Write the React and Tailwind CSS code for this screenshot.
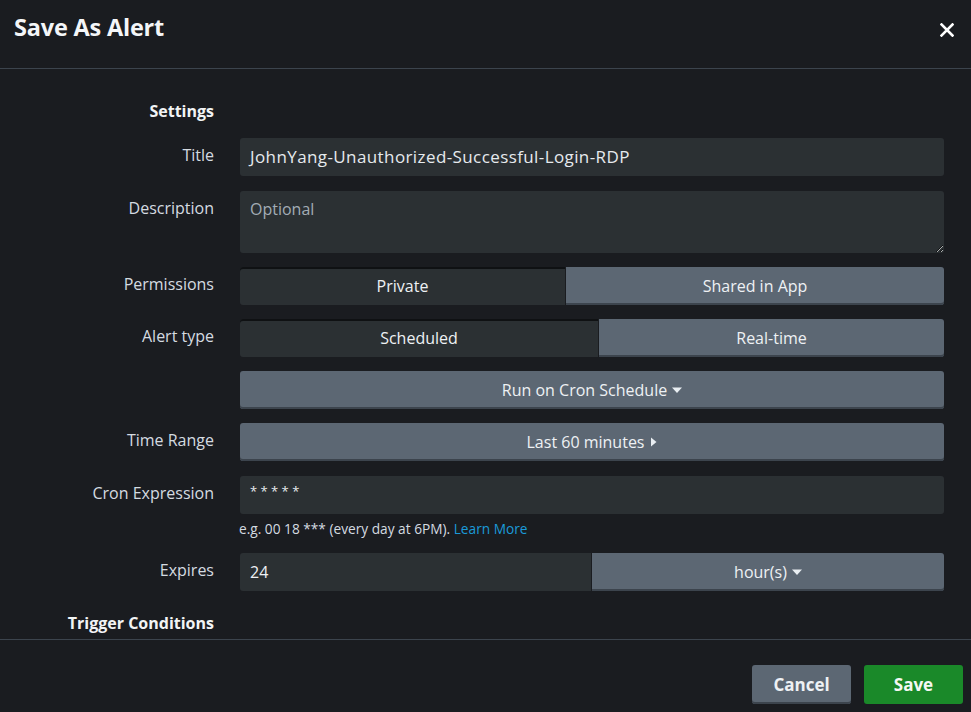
import React from "react";

const font = { fontFamily: "'Open Sans', Lato, sans-serif" };

function Caret({ dir = "down" }) {
  if (dir === "right")
    return (
      <svg width="7" height="10" viewBox="0 0 7 10" className="inline-block ml-[6px]">
        <path d="M1 0.5 L6.5 5 L1 9.5 Z" fill="#e9eef2" />
      </svg>
    );
  return (
    <svg width="10" height="7" viewBox="0 0 10 7" className="inline-block ml-[5px]">
      <path d="M0 0.5 L10 0.5 L5 6 Z" fill="#e9eef2" />
    </svg>
  );
}

function Row({ label, children, className = "" }) {
  return (
    <div className={"flex " + className}>
      <div className="w-[214px] shrink-0 text-right text-[16px] leading-[20px] pt-[7px] text-[#d5dbe0]">
        {label}
      </div>
      <div className="ml-[26px] w-[704px]">{children}</div>
    </div>
  );
}

const inputCls =
  "h-[38px] w-full rounded-[3px] bg-[#2b3033] text-[#e6eaee] text-[16px] px-[10px] flex items-center";
const btnCls =
  "h-[38px] rounded-[3px] bg-[#5c6773] text-[#eef1f4] text-[16px] flex items-center justify-center shadow-[inset_0_-2px_0_#3c444d]";

export default function App() {
  return (
    <div
      className="w-[971px] h-[712px] bg-[#1a1c20] flex flex-col overflow-hidden"
      style={font}
    >
      <div className="h-[69px] shrink-0 border-b border-[#3c444d] flex items-center justify-between pl-[14px] pr-[17px]">
        <div className="text-[23.5px] font-bold text-[#f4f6f8] -mt-[12px] tracking-[-0.2px]">Save As Alert</div>
        <svg width="14" height="14" viewBox="0 0 14 14" className="-mt-[8px]">
          <path d="M1.5 1.5 L12.5 12.5 M12.5 1.5 L1.5 12.5" stroke="#ffffff" strokeWidth="2.6" strokeLinecap="square" />
        </svg>
      </div>

      <div className="flex-1 overflow-hidden pt-[31px] flex flex-col">
        <div className="flex h-[22px]">
          <div className="w-[214px] text-right text-[16px] font-bold text-[#f2f4f5] leading-[22px]">
            Settings
          </div>
        </div>

        <Row label="Title" className="mt-[16px]">
          <div className={inputCls}>
            <span className="text-[17px] tracking-[0.4px]">JohnYang-Unauthorized-Successful-Login-RDP</span>
          </div>
        </Row>

        <Row label="Description" className="mt-[15px]">
          <textarea
            placeholder="Optional"
            className="block h-[62px] w-full rounded-[3px] bg-[#2b3033] text-[#e6eaee] placeholder-[#a3acb5] text-[16px] px-[10px] pt-[6px] outline-none resize-y"
            style={font}
          />
        </Row>

        <Row label="Permissions" className="mt-[14px]">
          <div className="flex h-[38px]">
            <div className="w-[325px] h-[38px] rounded-l-[3px] bg-[#2b3033] text-[#eef1f4] text-[16px] flex items-center justify-center shadow-[inset_0_2px_0_#0f1113]">
              Private
            </div>
            <div className="flex-1 ml-[1px] h-[38px] rounded-r-[3px] bg-[#5c6773] text-[#eef1f4] text-[16px] flex items-center justify-center shadow-[inset_0_-2px_0_#3c444d]">
              Shared in App
            </div>
          </div>
        </Row>

        <Row label="Alert type" className="mt-[14px]">
          <div className="flex h-[38px]">
            <div className="w-[358px] h-[38px] rounded-l-[3px] bg-[#2b3033] text-[#eef1f4] text-[16px] flex items-center justify-center shadow-[inset_0_2px_0_#0f1113]">
              Scheduled
            </div>
            <div className="flex-1 ml-[1px] h-[38px] rounded-r-[3px] bg-[#5c6773] text-[#eef1f4] text-[16px] flex items-center justify-center shadow-[inset_0_-2px_0_#3c444d]">
              Real-time
            </div>
          </div>
        </Row>

        <Row label="" className="mt-[14px]">
          <div className={btnCls}>
            Run on Cron Schedule
            <Caret />
          </div>
        </Row>

        <Row label="Time Range" className="mt-[14px]">
          <div className={btnCls}>
            Last 60 minutes
            <Caret dir="right" />
          </div>
        </Row>

        <Row label="Cron Expression" className="mt-[15px]">
          <div className={inputCls}>
            <span className="text-[13px] -mt-[6px]">* * * * *</span>
          </div>
          <div className="text-[13.7px] text-[#d5dbe0] mt-[6px] -ml-[1px] leading-[18px]">
            e.g. 00 18 *** (every day at 6PM).{" "}
            <span className="text-[#1a9ad9]">Learn More</span>
          </div>
        </Row>

        <Row label="Expires" className="mt-[15px]">
          <div className="flex h-[38px]">
            <div className="w-[351px] h-[38px] rounded-l-[3px] bg-[#2b3033] text-[#eef1f4] text-[16px] flex items-center px-[10px]">
              24
            </div>
            <div className="flex-1 ml-[1px] h-[38px] rounded-r-[3px] bg-[#5c6773] text-[#eef1f4] text-[16px] flex items-center justify-center shadow-[inset_0_-2px_0_#3c444d]">
              hour(s)
              <Caret />
            </div>
          </div>
        </Row>

        <div className="flex mt-[21px]">
          <div className="w-[214px] text-right text-[16px] font-bold text-[#f2f4f5] leading-[22px]">
            Trigger Conditions
          </div>
        </div>
      </div>

      <div className="h-[73px] shrink-0 border-t border-[#3c444d] flex items-start justify-end gap-[13px] pr-[8px] pt-[25px]">
        <div className="w-[99px] h-[39px] rounded-[3px] bg-[#5c6773] text-[#eef1f4] text-[17px] font-bold flex items-center justify-center shadow-[inset_0_-2px_0_#3c444d]">
          Cancel
        </div>
        <div className="w-[99px] h-[39px] rounded-[3px] bg-[#1a8929] text-[#f4f8f4] text-[17px] font-bold flex items-center justify-center">
          Save
        </div>
      </div>
    </div>
  );
}
